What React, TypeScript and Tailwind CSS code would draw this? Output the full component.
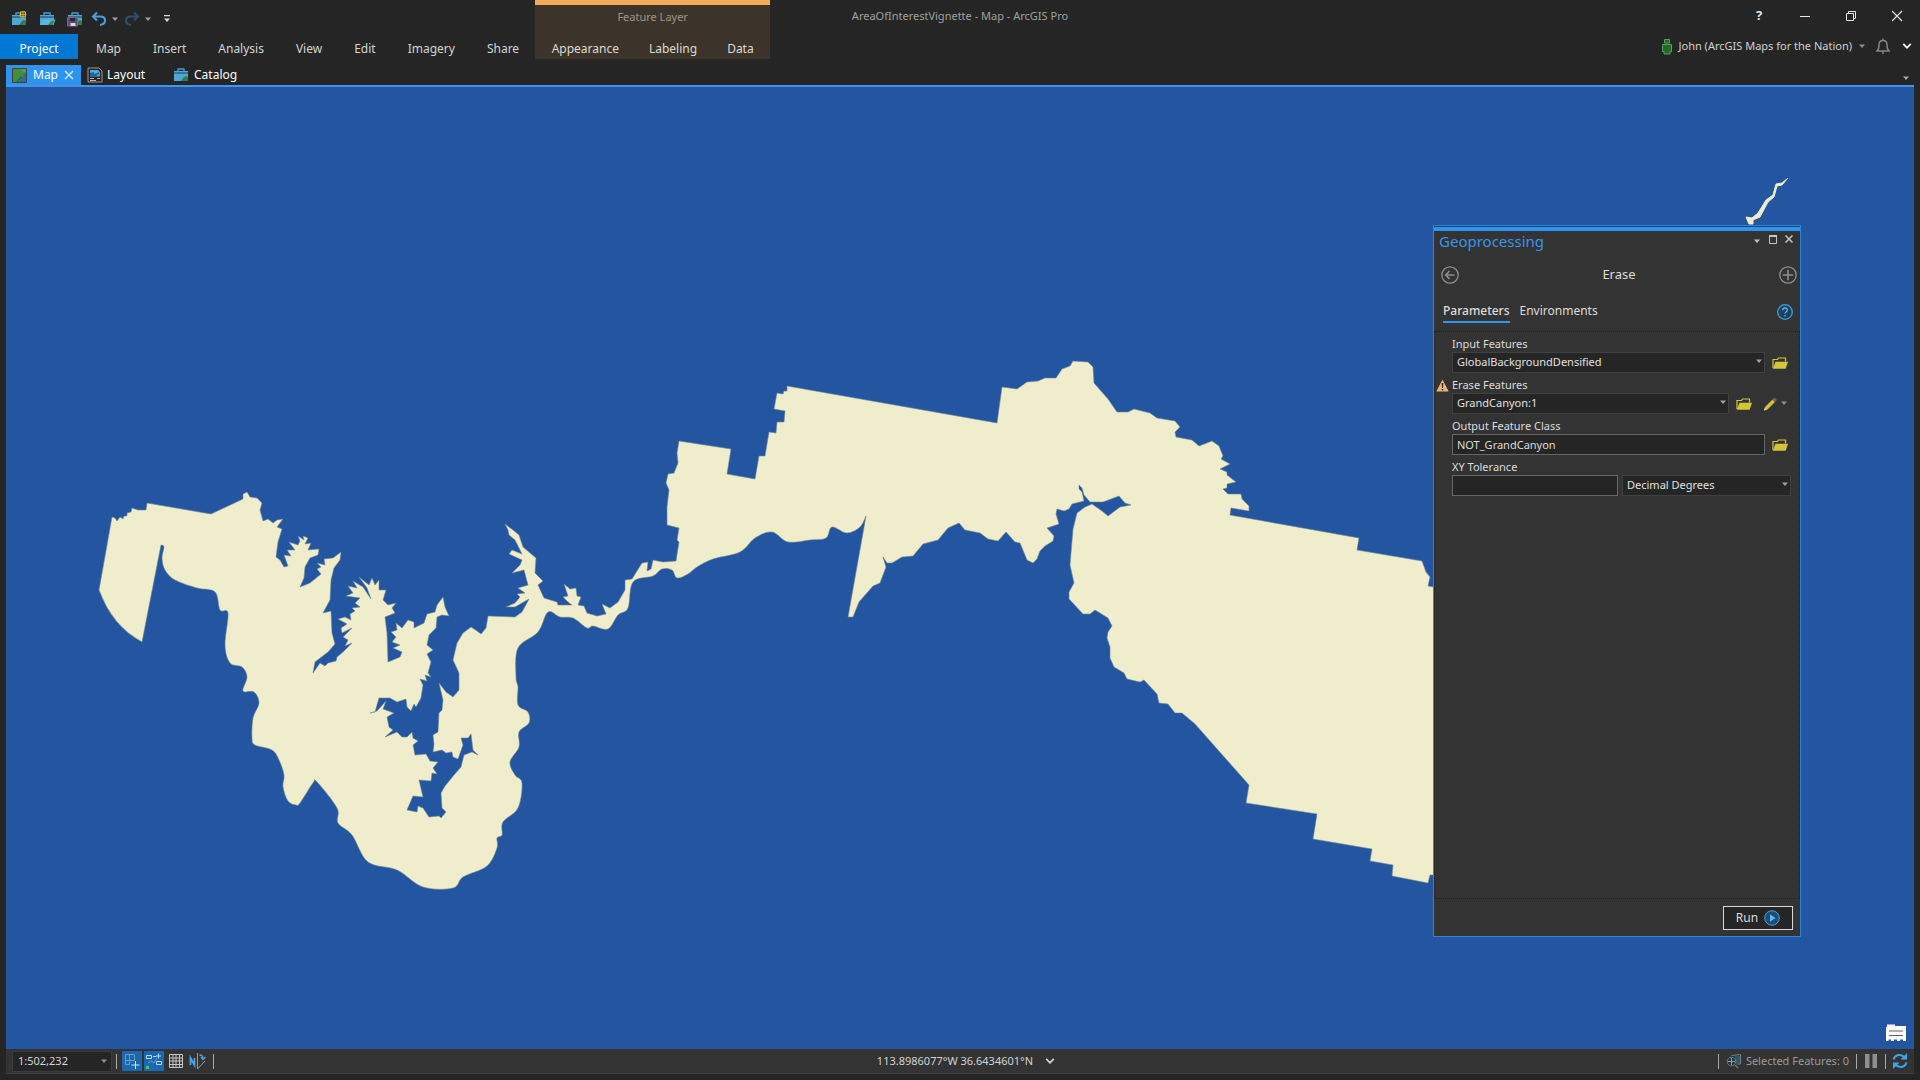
import { useState, type ReactNode } from 'react';
import clsx from 'clsx';

const RIBBON_TABS = ['Map', 'Insert', 'Analysis', 'View', 'Edit', 'Imagery', 'Share'];
const CONTEXT_TABS = ['Appearance', 'Labeling', 'Data'];

const RIM =
  'M142 642Q112 626 99 590L112 517 115 518 117 521 120 517 123 519 124 516 127 516 127 513 131 512 132 508 138 510 146 510 147 503 211 514 243 499 243 494 247 492 250 497 257 498 262 503 260 510 263 521 268 519 273 523 277 520 283 519 277 527 282 529 278 542 276 557 280 560 284 567 288 566 284 555 291 556 287 550 295 550 289 542 298 545 300 541 298 536 304 540 303 536 308 538 305 544 311 543 308 550 319 549 318 555 310 558 305 567 304 578 300 587 310 583 321 574 317 569 321 567 317 563 325 565 324 559 333 558 341 552 340 560 334 568 331 580 330 600 323 613 331 611 332 633 335 644 328 652 315 662 313 673 320 663 325 666 328 663 336 661 337 657 343 652 352 643 345 646 348 640 343 637 352 628 342 633 341 628 347 624 338 619 345 617 351 620 350 614 355 611 352 608 360 607 355 603 360 598 346 596 353 593 348 586 357 588 353 581 363 587 371 599 367 588 359 577 369 585 372 578 375 585 379 580 379 590 386 590 383 600 388 605 396 603 392 608 395 613 385 617 387 633 388 662 400 657 402 652 393 648 400 645 392 642 396 637 391 632 397 630 396 623 402 628 408 620 414 622 414 628 424 623 427 614 435 612 437 605 443 597 445 607 449 616 442 615 437 617 436 628 429 635 427 645 433 650 427 654 431 662 428 673 431 677 425 675 427 681 420 679 423 685 421 698 416 707 414 704 411 711 407 707 406 699 397 702 390 698 379 698 375 712 370 713 377 711 386 701 383 709 394 713 387 717 389 727 393 730 385 737 397 732 402 737 407 737 412 732 413 738 418 741 413 745 415 755 426 754 430 761 438 762 433 768 437 774 432 773 431 781 419 780 423 797 413 796 407 810 417 812 418 806 423 808 429 817 439 816 441 818 446 812 442 808 441 793 445 786 454 775 461 767 464 755 472 752 478 755 473 750 471 734 468 738 461 738 463 745 458 759 453 757 452 752 446 753 442 750 433 752 434 744 433 735 438 732 439 713 442 710 443 700 439 683 446 692 453 697 459 690 459 673 453 660 457 643 463 633 471 627 477 631 481 634 486 628 488 616 515 617 522 612 529 599 515 607 506 607 515 603 520 597 517 594 525 593 518 588 528 585 524 570 512 573 520 565 522 560 509 554 512 550 522 554 515 540 509 535 508 530 505 524 513 530 519 535 523 547 536 558 535 573 543 581 538 585 544 598 557 602 558 605 572 605 568 602 563 597 568 596 564 584 570 589 576 588 577 596 581 597 578 605 584 606 587 613 597 616 606 614 602 604 610 608 618 602 625 590 625 580 632 579 642 563 648 562 647 571 651 569 653 560 663 562 676 561 679 542 677 540 679 528 667 525 667 507 669 490 666 483 668 474 674 473 678 463 677 453 679 441 731 449 727 474 755 479 759 456 765 456 769 432 776 433 777 422 784 422 785 411 774 409 777 393 783 394 784 391 787 391 787 386 997 423 1002 387 1017 389 1027 382 1038 381 1045 378 1056 378 1062 369 1070 366 1073 361 1088 362 1093 367 1094 383 1108 399 1117 412 1128 412 1134 409 1150 413 1157 418 1175 421 1180 427 1175 432 1176 437 1192 440 1199 446 1212 441 1219 446 1223 456 1221 459 1230 464 1220 469 1227 472 1227 475 1236 482 1227 484 1227 488 1223 489 1228 494 1241 494 1242 499 1249 506 1249 511 1231 508 1230 515 1359 538 1357 550 1422 561 1426 572 1430 577 1428 586 1434 587V875H1430L1428 883 1392 876 1393 865 1370 861 1372 849 1313 839 1317 814 1246 803 1249 785 1195 724 1182 713 1175 713 1168 704 1159 703 1157 694 1144 680 1140 682 1127 679 1124 673 1114 667 1110 658 1110 647 1107 638 1108 632 1112 626 1108 618 1095 610 1090 614 1083 614 1069 599 1069 592 1074 583 1070 565 1073 529 1077 513 1085 507 1092 504 1102 511 1108 516 1120 507 1131 505 1125 503 1119 496 1103 502 1090 502 1084 495 1082 488 1079 485 1079 489 1082 492 1084 501 1072 504 1069 509 1064 511 1057 509 1056 514 1059 524 1047 528 1054 536 1053 541 1045 546 1040 551 1037 559 1033 563 1027 560 1020 543 1015 542 1006 532 998 541 988 539 980 533 965 530 959 523 948 528 938 540 923 544 913 556 902 557 892 563 887 563 883 557 886 567 880 583 873 586 859 602 853 617 848 617 866 516';

// South shore, drawn as a smooth curve through these points
const SHORE =
  '866,516 860,527 847,533 832,527 826,538 810,540 788,542 772,532 755,538 740,552 713,559 697,567 688,574 677,578 672,570 662,569 653,576 633,582 628,608 618,615 608,629 593,626 587,628 573,618 560,617 548,612 538,632 518,648 516,677 518,687 518,705 528,712 529,723 519,732 519,747 510,762 515,775 522,783 518,808 503,822 502,835 497,838 497,848 487,866 463,877 453,888 423,887 397,870 368,862 352,835 338,823 337,808 317,782 313,783 300,803 296,805 288,801 283,787 284,775 279,760 272,750 255,745 252,738 253,718 259,703 254,692 243,691 247,677 242,667 230,663 225,645 228,613 220,610 215,592 197,588 175,580 165,570 162,558 164,547 161,545';

const RIVER =
  'M1788 178L1782 185 1777 186 1774 197 1768 202 1760 217 1753 220V224H1749L1746 217 1752 218 1758 213 1766 200 1773 195 1776 184 1782 183Z';

function smooth(points: string) {
  const p = points.split(' ').map((pair) => pair.split(',').map(Number));
  let d = '';
  for (let i = 0; i < p.length - 1; i++) {
    const before = p[Math.max(i - 1, 0)];
    const from = p[i];
    const to = p[i + 1];
    const after = p[Math.min(i + 2, p.length - 1)];
    const c1 = [from[0] + (to[0] - before[0]) / 6, from[1] + (to[1] - before[1]) / 6];
    const c2 = [to[0] - (after[0] - from[0]) / 6, to[1] - (after[1] - from[1]) / 6];
    d += `C${c1[0]} ${c1[1]} ${c2[0]} ${c2[1]} ${to[0]} ${to[1]}`;
  }
  return d;
}

const BOUNDARY = `${RIM}${smooth(SHORE)}Z`;

function Caret({ className }: { className?: string }) {
  return (
    <svg viewBox="0 0 8 5" className={clsx('h-[5px] w-2', className)} fill="currentColor">
      <path d="M1 0.5h6L4 4z" />
    </svg>
  );
}

function Chevron() {
  return (
    <svg viewBox="0 0 10 8" className="h-2 w-2.5" fill="none" stroke="currentColor" strokeWidth="1.8">
      <path d="M1.2 1.8L5 5.8l3.8-4" />
    </svg>
  );
}

function Toolbox({ children }: { children?: ReactNode }) {
  return (
    <svg viewBox="0 0 17 16" className="h-4 w-[17px]">
      <path d="M5 4.5V2h6v2.5" fill="none" stroke="#3f9fd0" strokeWidth="1.3" />
      <path d="M1 4h14v10H1z" fill="#4da8d8" />
      <path d="M1 6h14" stroke="#25506c" strokeWidth="1.2" />
      <path d="M8 14l3-4 2-1 2 1v4z" fill="#2f7d4a" />
      {children}
    </svg>
  );
}

function FolderIcon() {
  return (
    <svg viewBox="0 0 16 14" className="h-3.5 w-4">
      <path d="M1 12V3.5h4.5l1-1.5h7v3.5" fill="none" stroke="#d8c53c" strokeWidth="1.2" />
      <path d="M3.5 5.8H16l-2.4 7H.8z" fill="#d6c338" />
    </svg>
  );
}

function MapIcon() {
  return (
    <svg viewBox="0 0 15 15" className="size-[15px]">
      <path d="M.5.5h14v14H.5z" fill="#3f8f3f" stroke="#493f37" />
      <path d="M7 14l1-4 3-1 .5-4L14 3v11z" fill="#2d6c9e" />
      <path d="M10 1h4v3l-3 1z" fill="#4ea04a" />
      <path d="M5 14l2-3 3-2" fill="none" stroke="#25542c" />
    </svg>
  );
}

function LayoutIcon() {
  return (
    <svg viewBox="0 0 16 16" className="size-4">
      <path d="M1 1h11l3 3v11H1z" fill="#252525" stroke="#9a9a9a" />
      <path d="M3 3h8l2 2v4.5H3z" fill="#4da8d8" />
      <path d="M3 6l3-1 2 2 4-2v2L8 9.500H3z" fill="#216795" />
      <path d="M3 11.5h4M3 13.5h6M10 11.5h3" stroke="#b5b5b5" />
    </svg>
  );
}

function QuickAccess() {
  return (
    <div className="flex h-[34px] items-center gap-[11px] pt-1 pl-[11px] text-[#a0a0a0]">
      <button aria-label="New project">
        <Toolbox>
          <path d="M9.5.8h5v5h-5z" fill="#5b4b1e" stroke="#e0b93a" />
          <path d="M12 0v7M8.500 3.500h7" stroke="#e0b93a" strokeWidth="0.8" />
        </Toolbox>
      </button>
      <button aria-label="Open project">
        <Toolbox>
          <path d="M3 8.5h13.5l-2 5.500H1z" fill="#5cb4e2" />
          <path d="M9 14l3-4 3-1-1 5z" fill="#2f8a55" />
        </Toolbox>
      </button>
      <button aria-label="Save project">
        <Toolbox>
          <path d="M.5 6.500h10V15H.5z" fill="#5f4a72" stroke="#7d6590" />
          <path d="M3 7h5v3H3z" fill="#2a2530" />
          <path d="M3.500 12h5v3h-5z" fill="#d8d0e0" />
        </Toolbox>
      </button>
      <div className="-ml-1 flex items-center gap-1">
        <button aria-label="Undo">
          <svg viewBox="0 0 16 16" className="size-4" fill="none" stroke="#4a9fe0" strokeWidth="2">
            <path d="M6 1.5l-4 4 4 4M2.500 5.500h7c3 0 4.500 1.500 4.500 4s-1.500 4-5 4.500" />
          </svg>
        </button>
        <Caret />
      </div>
      <div className="-ml-1.5 flex items-center gap-1">
        <button aria-label="Redo">
          <svg viewBox="0 0 16 16" className="size-4" fill="none" stroke="#2f4f6a" strokeWidth="2">
            <path d="M10 1.5l4 4-4 4M13.500 5.500h-7c-3 0-4.500 1.500-4.500 4s1.500 4 5 4.500" />
          </svg>
        </button>
        <Caret />
      </div>
      <button aria-label="Customize toolbar" className="text-[#d8d8d8]">
        <svg viewBox="0 0 8 8" className="size-2" fill="currentColor">
          <path d="M1 0h6v1.200H1zM1 3.500h6L4 7z" />
        </svg>
      </button>
    </div>
  );
}

function Header() {
  return (
    <header className="grid h-[59px] grid-cols-[1fr_auto_1fr]">
      <div className="flex">
        <div>
          <QuickAccess />
          <nav className="flex h-[25px] text-xs text-[#d4d4d4]">
            <button className="mr-0.5 w-[78px] bg-[#0078d4] pt-1 text-white">Project</button>
            {RIBBON_TABS.map((tab) => (
              <button key={tab} className="px-4 pt-1">
                {tab}
              </button>
            ))}
          </nav>
        </div>
        <div className="flex w-[235px] flex-col border-t-[5px] border-[#f3a95a] bg-[#3c342a]">
          <div className="flex h-[29px] items-center justify-center pb-1 text-[11px] text-[#9c958b]">
            Feature Layer
          </div>
          <nav className="flex h-[25px] justify-center text-xs text-[#dedad4]">
            {CONTEXT_TABS.map((tab) => (
              <button key={tab} className="px-[15px] pt-1">
                {tab}
              </button>
            ))}
          </nav>
        </div>
      </div>
      <h1 className="h-8 text-[11px] leading-8 text-[#a0a0a0]">AreaOfInterestVignette - Map - ArcGIS Pro</h1>
      <div className="flex flex-col items-end">
        <div className="flex h-[31px] text-[#e6e6e6]">
          <button aria-label="Help" className="w-[46px] text-[13px] font-bold">
            ?
          </button>
          <button aria-label="Minimize" className="flex w-[46px] items-center justify-center">
            <svg viewBox="0 0 12 12" className="size-3" stroke="currentColor">
              <path d="M1 6.500h10" />
            </svg>
          </button>
          <button aria-label="Restore" className="flex w-[46px] items-center justify-center">
            <svg viewBox="0 0 12 12" className="size-3" fill="none" stroke="currentColor">
              <path d="M1.500 3.500h7v7h-7zM3.500 3.500v-2h7v7h-2" />
            </svg>
          </button>
          <button aria-label="Close" className="flex w-[46px] items-center justify-center">
            <svg viewBox="0 0 12 12" className="size-3" stroke="currentColor" strokeWidth="1.2">
              <path d="M1 1l10 10M11 1L1 11" />
            </svg>
          </button>
        </div>
        <div className="flex h-7 items-center pt-0.5 pr-2 text-[#d0d0d0]">
          <button className="flex items-center gap-1.5 text-[11px]">
            <svg viewBox="0 0 12 17" className="h-[17px] w-3" fill="#1e6b22" stroke="#5f9c5f">
              <path d="M3.500 1.500h5V5h-5z" />
              <path d="M1.500 6.500h9v7H9V16H3v-2.500H1.500z" />
            </svg>
            John (ArcGIS Maps for the Nation)
            <Caret className="text-[#909090]" />
          </button>
          <button aria-label="Notifications" className="mr-3 ml-2.5">
            <svg viewBox="0 0 14 17" className="h-[17px] w-3.5" fill="none" stroke="#858585" strokeWidth="1.5">
              <path d="M1 13h12c-2-1.500-2-3-2-6 0-3-1.500-4.500-4-4.500S3 4 3 7c0 3 0 4.500-2 6zM7 2.500v-2M7 13v3" />
            </svg>
          </button>
          <button aria-label="Collapse ribbon" className="text-white">
            <Chevron />
          </button>
        </div>
      </div>
    </header>
  );
}

function DocumentTabs() {
  return (
    <div className="mx-1.5 flex h-7 items-end border-b-2 border-[#4693e6] text-xs text-white">
      <div className="flex h-5 w-[75px] items-center bg-[#2d94f0] pl-1.5">
        <button className="flex items-center gap-1.5">
          <MapIcon />
          Map
        </button>
        <button aria-label="Close Map" className="ml-1.5">
          <svg viewBox="0 0 10 10" className="size-2.5" stroke="#d8ecff" strokeWidth="1.4">
            <path d="M1 1l8 8M9 1L1 9" />
          </svg>
        </button>
      </div>
      <button className="flex h-5 w-[86px] items-center gap-1 pl-1.5">
        <LayoutIcon />
        Layout
      </button>
      <button className="flex h-5 items-center gap-1 pl-1.5">
        <Toolbox />
        Catalog
      </button>
      <button aria-label="View list" className="ml-auto pr-1 pb-1 text-[#a8a8a8]">
        <Caret />
      </button>
    </div>
  );
}

type ComboProps = {
  id: string;
  value: string;
  label?: string;
  className?: string;
};

function Combo({ id, value, label, className }: ComboProps) {
  return (
    <div className={clsx('relative', className)}>
      <select
        id={id}
        aria-label={label}
        defaultValue={value}
        className="block h-[21px] w-full appearance-none border border-[#404040] bg-[#252525] px-1 text-[11px] text-[#e0e0e0]"
      >
        <option>{value}</option>
      </select>
      <Caret className="pointer-events-none absolute top-[7px] right-0.5 text-[#a0a0a0]" />
    </div>
  );
}

function Field({ id, label, children }: { id: string; label: string; children: ReactNode }) {
  return (
    <div>
      <label htmlFor={id} className="block h-5 text-[11px] leading-6">
        {label}
      </label>
      <div className="flex items-center">{children}</div>
    </div>
  );
}

function Browse() {
  return (
    <button type="button" aria-label="Browse" className="ml-[7px]">
      <FolderIcon />
    </button>
  );
}

function GeoprocessingPane() {
  const [output, setOutput] = useState('NOT_GrandCanyon');
  const [tolerance, setTolerance] = useState('');

  return (
    <section className="absolute top-[138px] right-[113px] flex h-[712px] w-[368px] flex-col border border-[#2f86d6] bg-[#333333] text-[#dcdcdc]">
      <div className="h-[5px] border-t border-[#17406f] bg-[#2d94f0]" />
      <div className="flex h-[22px] items-center pl-[5px]">
        <h2 className="flex-1 pb-0.5 text-[15px] leading-5 text-[#3795ea]">Geoprocessing</h2>
        <div className="flex items-center gap-2 pr-[7px] pb-1.5 text-[#c4c4c4]">
          <button aria-label="Pane options" className="pt-1">
            <Caret />
          </button>
          <button aria-label="Maximize">
            <svg viewBox="0 0 8 9" className="h-[9px] w-2" fill="none" stroke="currentColor">
              <path d="M.5 1v7.500h7V1" />
              <path d="M0 1h8" strokeWidth="2" />
            </svg>
          </button>
          <button aria-label="Close pane">
            <svg viewBox="0 0 8 8" className="size-2" stroke="currentColor" strokeWidth="1.5">
              <path d="M.5.5l7 7M7.500.5l-7 7" />
            </svg>
          </button>
        </div>
      </div>
      <div className="flex h-11 items-center justify-between pr-[3px] pl-[7px] text-[#8f8f8f]">
        <button aria-label="Back">
          <svg viewBox="0 0 18 18" className="size-[18px]" fill="none" stroke="currentColor" strokeWidth="1.3">
            <circle cx="9" cy="9" r="8.200" />
            <path d="M13.500 9H5M8.500 5L4.700 9l3.800 4" strokeWidth="1.6" />
          </svg>
        </button>
        <h3 className="text-[13px] text-[#dcdcdc]">Erase</h3>
        <button aria-label="Add to batch">
          <svg viewBox="0 0 18 18" className="size-[18px]" fill="none" stroke="currentColor" strokeWidth="1.3">
            <circle cx="9" cy="9" r="8.200" />
            <path d="M9 3.800v10.400M3.800 9h10.400" strokeWidth="1.6" />
          </svg>
        </button>
      </div>
      <div className="flex h-[34px] items-start gap-2.5 pt-1 pr-[7px] pl-[9px] text-xs">
        <button className="border-b-2 border-[#2d94f0] leading-5 font-medium">Parameters</button>
        <button className="leading-5">Environments</button>
        <button aria-label="Tool help" className="ml-auto pt-[3px]">
          <svg viewBox="0 0 16 16" className="size-4" fill="none" stroke="#3fa0d8" strokeWidth="1.3">
            <circle cx="8" cy="8" r="7.300" fill="#1a4360" />
            <path d="M5.700 6.300c0-3 4.600-3 4.600-.3 0 1.800-2.300 1.800-2.300 3.600M8 11v1.600" stroke="#5fb8ea" />
          </svg>
        </button>
      </div>
      <form className="flex-1 border border-dotted border-[#1f1f1f] pr-2 pl-[17px]">
        <Field id="input-features" label="Input Features">
          <Combo id="input-features" value="GlobalBackgroundDensified" className="flex-1" />
          <Browse />
          <span className="w-[3px]" />
        </Field>
        <div className="relative">
          <svg viewBox="0 0 13 13" className="absolute top-1.5 -left-4 size-[13px]">
            <path d="M6.500.5l6.200 12H.3z" fill="#eeb27c" />
            <path d="M5.700 4h1.600L7 9H6zM5.700 10h1.600v1.500H5.700z" fill="#302318" />
          </svg>
          <Field id="erase-features" label="Erase Features">
            <Combo id="erase-features" value="GrandCanyon:1" className="flex-1" />
            <Browse />
            <button type="button" aria-label="Draw features" className="ml-2.5 flex items-center gap-0.5 pr-[3px]">
              <svg viewBox="0 0 16 16" className="size-4">
                <path d="M2 14.500l1-3.500 7.500-7.500L13 6l-7.500 7.500z" fill="#d3bd3a" />
                <path d="M10.500 3.500l2-2L15 4l-2 2z" fill="#7d5a5e" />
                <path d="M2 14.500l.7-2.500 1.800 1.800z" fill="#e8d9a8" />
              </svg>
              <Caret className="text-[#909090]" />
            </button>
          </Field>
        </div>
        <Field id="output-class" label="Output Feature Class">
          <input
            id="output-class"
            type="text"
            value={output}
            onChange={(e) => setOutput(e.target.value)}
            className="h-[21px] min-w-0 flex-1 border border-[#666666] bg-[#252525] px-1 text-[11px]"
          />
          <Browse />
          <span className="w-[3px]" />
        </Field>
        <Field id="xy-tolerance" label="XY Tolerance">
          <input
            id="xy-tolerance"
            type="text"
            value={tolerance}
            onChange={(e) => setTolerance(e.target.value)}
            className="mr-1 h-[21px] w-[166px] border border-[#666666] bg-[#252525] px-1 text-[11px]"
          />
          <Combo id="xy-unit" label="XY Tolerance unit" value="Decimal Degrees" className="flex-1" />
        </Field>
      </form>
      <div className="flex h-[37px] items-center justify-end pr-[7px]">
        <button className="flex h-6 w-[70px] items-center justify-center gap-1.5 border border-[#d8d8d8] bg-[#252525] text-xs">
          Run
          <svg viewBox="0 0 16 16" className="size-4">
            <circle cx="8" cy="8" r="7.300" fill="#1a4f78" stroke="#4a9fd8" />
            <path d="M6 4.300L11.500 8 6 11.700z" fill="#5db5f0" />
          </svg>
        </button>
      </div>
    </section>
  );
}

function MapView() {
  return (
    <main className="relative mx-1.5 min-h-0 flex-1 overflow-hidden bg-[#2355a0]">
      <svg
        viewBox="6 87 1908 962"
        preserveAspectRatio="xMidYMid slice"
        className="block size-full"
        fill="#efedcb"
        stroke="#6f8a92"
        strokeWidth="0.6"
      >
        <path d={BOUNDARY} />
        <path d={RIVER} stroke="#efedcb" strokeWidth="1" />
      </svg>
      <button aria-label="Map notes" className="absolute right-[7px] bottom-[7px]">
        <svg viewBox="0 0 22 18" className="h-[18px] w-[22px]">
          <path d="M1 3h1V.5h8V2h11v15h-3v-1.500h-3V17h-3v-1.500H9V17H6v-1.500H3.500V17H1z" fill="#fff" />
          <path d="M4 7h14M4 11.500h14" stroke="#5a5f66" strokeWidth="1.2" />
        </svg>
      </button>
      <GeoprocessingPane />
    </main>
  );
}

function Divider() {
  return <span className="h-[15px] w-px bg-[#a8a8a8]" />;
}

function StatusBar() {
  return (
    <footer className="mx-1.5 mb-1.5 grid h-[25px] grid-cols-[1fr_auto_1fr] items-center border-b border-[#404040] bg-[#333333] text-[11px] text-[#d4d4d4]">
      <div className="flex items-center pl-1.5">
        <div className="relative w-[100px]">
          <select
            aria-label="Map scale"
            defaultValue="1:502,232"
            className="block h-[21px] w-full appearance-none border border-[#3c3c3c] bg-[#252525] px-[5px]"
          >
            <option>1:502,232</option>
          </select>
          <Caret className="pointer-events-none absolute top-2 right-1 text-[#909090]" />
        </div>
        <span className="w-1" />
        <Divider />
        <button aria-label="Snapping" className="ml-[5px] bg-[#1a68b4]">
          <svg viewBox="0 0 20 20" className="size-5" fill="none" stroke="#7d93a8">
            <path d="M3.500 3.500h4v10h-4zM7.500 3.500h5v6h-5zM3.500 9.500h5" />
            <path d="M13.500 10v8M9.500 14h8" stroke="#d4e4f2" />
          </svg>
        </button>
        <button aria-label="Dynamic constraints" className="ml-0.5 bg-[#1a68b4]">
          <svg viewBox="0 0 20 20" className="size-5" fill="none" stroke="#c4d4e2">
            <path d="M2.500 4.500h5v3h-5zM12.500 10.500h5v3h-5zM9 5.500h3M14.500 2.500v5M12 5h5" />
            <path d="M4 12l3-2 3 2 3-5" stroke="#4aa5e0" />
            <path d="M2 15h3v3H2z" fill="#58c050" stroke="none" />
          </svg>
        </button>
        <button aria-label="Grid" className="ml-[5px]">
          <svg viewBox="0 0 14 14" className="size-3.5" fill="none" stroke="#c8c8c8">
            <path d="M.5.5h13v13H.5zM.5 4h13M.5 7h13M.5 10.500h13M4 .5v13M7 .5v13M10.500.5v13" />
          </svg>
        </button>
        <button aria-label="Rotation" className="mx-1.5">
          <svg viewBox="0 0 18 18" className="size-[18px]" fill="none">
            <path d="M1.500 13V6l4 7V6" stroke="#4aa5e8" strokeWidth="1.8" />
            <path d="M8.500 1v16L16 9" stroke="#9a9a9a" />
            <path d="M10.500 3c3 0 3.500 1 3.500 4M12 5l2 2.500L16.500 5" stroke="#4aa5e8" strokeWidth="1.3" />
          </svg>
        </button>
        <Divider />
      </div>
      <button className="flex items-center gap-3 pl-3">
        113.8986077°W 36.6434601°N
        <Chevron />
      </button>
      <div className="flex items-center justify-end pr-1.5">
        <Divider />
        <button className="mr-[7px] ml-[7px] flex items-center gap-1 text-[#9a9a9a]">
          <svg viewBox="0 0 16 16" className="size-4" fill="none">
            <path d="M5.500 2.500l9-1V11h-4" stroke="#6f7f8a" />
            <path d="M9 3h5v7H9z" fill="#33566b" />
            <circle cx="5.500" cy="8.500" r="4.300" stroke="#3f88a8" />
            <path d="M5.500 5v7M2 8.500h7" stroke="#7fa5b5" />
            <path d="M9 12l3 3" stroke="#8a6a4a" strokeWidth="1.5" />
          </svg>
          Selected Features: 0
        </button>
        <Divider />
        <button aria-label="Pause drawing" className="mx-2">
          <svg viewBox="0 0 12 14" className="h-3.5 w-3" fill="#8f8f8f">
            <path d="M0 0h4.500v14H0zM7.500 0H12v14H7.500z" />
          </svg>
        </button>
        <Divider />
        <button aria-label="Refresh" className="ml-1.5">
          <svg viewBox="0 0 16 16" className="size-4" fill="none" stroke="#3fa3ec" strokeWidth="2.2">
            <path d="M1.500 6.500c1-3 3-4.500 6-4.500 2 0 3.500.7 5 2.500M14.500 9.500c-1 3-3 4.500-6 4.500-2 0-3.500-.7-5-2.500" />
            <path d="M15 0v6.500H8.500zM1 16V9.500h6.500z" fill="#3fa3ec" stroke="none" />
          </svg>
        </button>
      </div>
    </footer>
  );
}

export default function App() {
  return (
    <div className="flex h-screen flex-col bg-[#252525] font-['Noto_Sans',sans-serif]">
      <Header />
      <DocumentTabs />
      <MapView />
      <StatusBar />
    </div>
  );
}
